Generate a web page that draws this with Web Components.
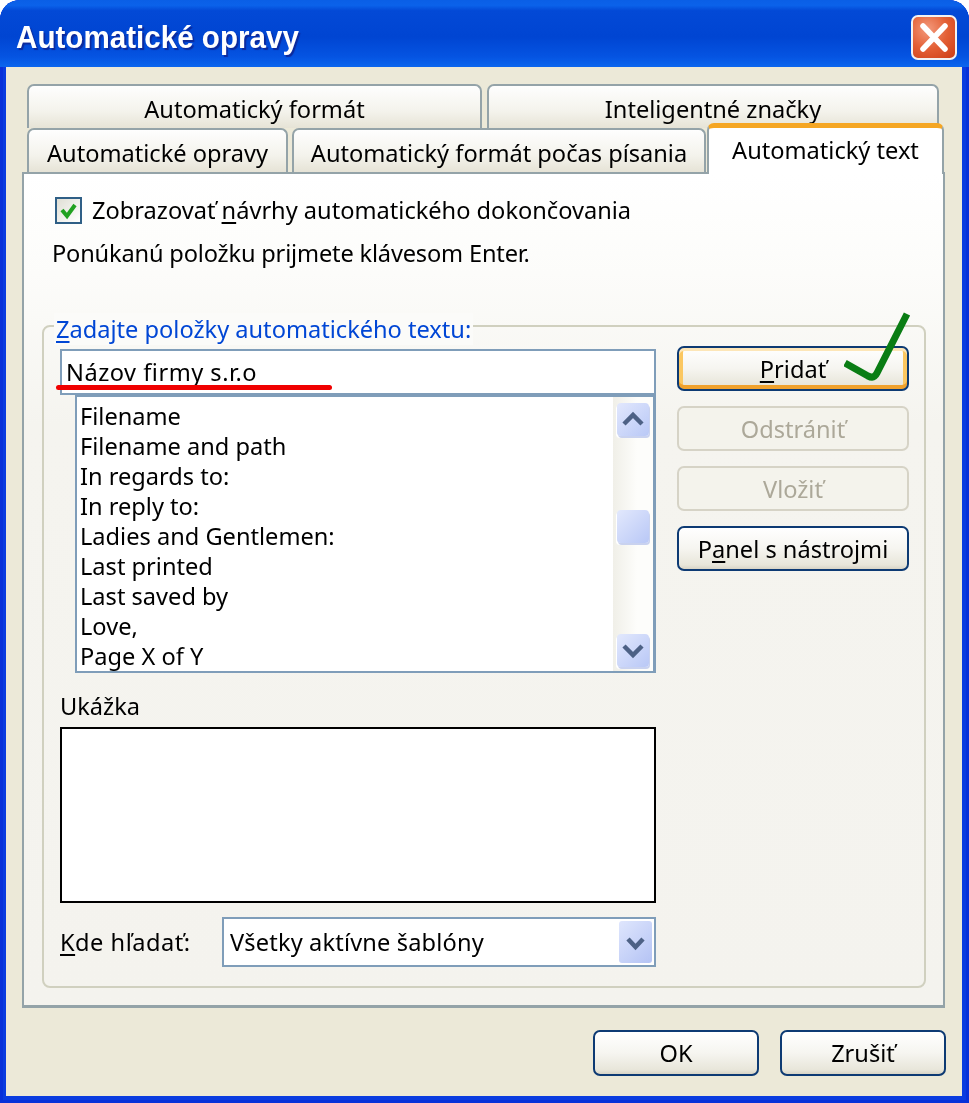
<!DOCTYPE html>
<html lang="sk">
<head>
<meta charset="utf-8">
<title>Automatické opravy</title>
<style>
html, body { margin: 0; padding: 0; background: #fff; }
body { width: 969px; height: 1103px; overflow: hidden; font-family: "Noto Sans", "Liberation Sans", sans-serif; font-size: 23.6px; color: #000; }
</style>
</head>
<body>
<xp-window caption="Automatické opravy">
  <xp-tabs>
    <xp-tab slot="top" style="width:455px">Automatický formát</xp-tab>
    <xp-tab slot="top" style="width:452px">Inteligentné značky</xp-tab>
    <xp-tab slot="bottom" style="width:261px">Automatické opravy</xp-tab>
    <xp-tab slot="bottom" style="width:414px">Automatický formát počas písania</xp-tab>
    <xp-tab slot="bottom" selected style="width:237px;margin-left:-3px">Automatický text</xp-tab>
    <xp-autotext-page slot="panel"></xp-autotext-page>
  </xp-tabs>
  <xp-button slot="footer" style="width:166px;height:46px">OK</xp-button>
  <xp-button slot="footer" style="width:166px;height:46px">Zrušiť</xp-button>
</xp-window>

<script>
class XpWindow extends HTMLElement {
    constructor() {
        super();
        this.attachShadow({ mode: "open" });
        this.shadowRoot.innerHTML = `
        <style>
        :host { display: block; width: 969px; height: 1103px; filter: blur(.7px); }
        .frame {
            height: 100%;
            box-sizing: border-box;
            display: flex;
            flex-direction: column;
            background: #0a3ce0;
            border-radius: 20px 20px 0 0;
            padding: 0 7px 7px 6px;
            box-shadow: inset 3px 0 0 #0831d9, inset -3px 0 0 #0831d9, inset 0 -3px 0 #0831d9;
        }
        .title {
            flex: none;
            height: 67px;
            margin: 0 -7px 0 -6px;
            padding: 8px 12px 0 16px;
            display: flex;
            align-items: center;
            justify-content: space-between;
            box-sizing: border-box;
            border-radius: 20px 20px 0 0;
            background: linear-gradient(#0a5fe6 0, #0b62ea 8%, #0349d6 16%, #0045d2 55%, #0554e2 85%, #0b66ee 100%);
        }
        .caption {
            font: bold 32px "Liberation Sans", sans-serif;
            color: #fff;
            text-shadow: 2px 2px 1px #0c2a9c;
            transform: scaleX(.925);
            transform-origin: left;
            white-space: nowrap;
        }
        .close {
            width: 46px;
            height: 45px;
            box-sizing: border-box;
            border: 2px solid #f2f2f2;
            border-radius: 7px;
            background: radial-gradient(circle at 35% 30%, #f39a7d 0, #e35f35 50%, #cc3d16 100%);
        }
        .close svg { display: block; width: 100%; height: 100%; }
        .client {
            flex: 1;
            display: flex;
            flex-direction: column;
            background: #ece9d8;
            padding: 17px 17px 20px 16px;
            min-height: 0;
        }
        .footer {
            display: flex;
            justify-content: flex-end;
            gap: 21px;
            margin: 22px -1px 0 0;
        }
        </style>
        <div class="frame">
            <div class="title">
                <span class="caption"></span>
                <div class="close">
                    <svg viewBox="0 0 42 41"><path d="M10 9 L32 32 M32 9 L10 32" stroke="#fff" stroke-width="5.5" stroke-linecap="round" fill="none"/></svg>
                </div>
            </div>
            <div class="client">
                <slot></slot>
                <div class="footer"><slot name="footer"></slot></div>
            </div>
        </div>`;
        this.shadowRoot.querySelector(".caption").textContent = this.getAttribute("caption");
    }
}
customElements.define("xp-window", XpWindow);

class XpTabs extends HTMLElement {
    constructor() {
        super();
        this.attachShadow({ mode: "open" });
        this.shadowRoot.innerHTML = `
        <style>
        :host { display: block; }
        .row { display: flex; align-items: flex-end; }
        .row--top { gap: 5px; padding-left: 5px; height: 44px; }
        .row--bottom { gap: 4px; padding-left: 5px; height: 44px; position: relative; z-index: 1; }
        .panel {
            height: 836px;
            box-sizing: border-box;
            border: 2px solid #94a3a8;
            border-bottom-width: 3px;
            background: linear-gradient(#fff 0, #fcfcfa 12%, #f5f4ef 30%, #f4f3ee 100%);
        }
        </style>
        <div class="row row--top"><slot name="top"></slot></div>
        <div class="row row--bottom"><slot name="bottom"></slot></div>
        <div class="panel"><slot name="panel"></slot></div>`;
    }
}
customElements.define("xp-tabs", XpTabs);

class XpTab extends HTMLElement {
    constructor() {
        super();
        this.attachShadow({ mode: "open" });
        this.shadowRoot.innerHTML = `
        <style>
        :host {
            display: flex;
            flex: none;
            align-items: center;
            justify-content: center;
            box-sizing: border-box;
            height: 44px;
            white-space: nowrap;
            padding-top: 4px;
            border: 2px solid #94a3a8;
            border-bottom: 0;
            border-radius: 7px 7px 0 0;
            background: linear-gradient(#fefefe, #f4f3ec 60%, #e6e3d6);
        }
        :host([selected]) {
            height: 51px;
            margin-bottom: -2px;
            padding-top: 2px;
            padding-bottom: 5px;
            border-top: 5px solid #f5a623;
            background: linear-gradient(#fff, #fff);
        }
        </style>
        <slot></slot>`;
    }
}
customElements.define("xp-tab", XpTab);

class XpButton extends HTMLElement {
    constructor() {
        super();
        this.attachShadow({ mode: "open" });
        this.shadowRoot.innerHTML = `
        <style>
        :host {
            display: flex;
            flex: none;
            align-items: center;
            justify-content: center;
            box-sizing: border-box;
            white-space: nowrap;
            border: 2px solid #0d3a73;
            border-radius: 7px;
            background: linear-gradient(#fff, #f6f5f0 50%, #e8e6da 90%, #d8d4c6);
        }
        :host([focused]) {
            box-shadow: inset 0 3px 0 #fde6b8, inset 0 -4px 0 #f0a12c, inset 4px 0 0 #fbc761, inset -4px 0 0 #fbc761;
        }
        :host([disabled]) {
            border-color: #d6d3c6;
            background: #f4f3ec;
            color: #aca899;
        }
        </style>
        <slot></slot>`;
    }
}
customElements.define("xp-button", XpButton);

class XpCheckbox extends HTMLElement {
    constructor() {
        super();
        this.attachShadow({ mode: "open" });
        this.shadowRoot.innerHTML = `
        <style>
        :host { display: flex; align-items: center; gap: 10px; white-space: nowrap; }
        .box {
            flex: none;
            width: 27px;
            height: 27px;
            box-sizing: border-box;
            border: 2px solid #2f5f86;
            background: linear-gradient(135deg, #e0dfd5, #fff);
        }
        .box svg { display: block; width: 100%; height: 100%; }
        </style>
        <span class="box"><svg viewBox="0 0 23 23"><path d="M5 11 L10 17 L18 6" stroke="#21a121" stroke-width="4" fill="none"/></svg></span>
        <span><slot></slot></span>`;
    }
}
customElements.define("xp-checkbox", XpCheckbox);

class XpScrollbar extends HTMLElement {
    constructor() {
        super();
        this.attachShadow({ mode: "open" });
        this.shadowRoot.innerHTML = `
        <style>
        :host {
            display: block;
            position: relative;
            width: 40px;
            box-sizing: border-box;
            background: linear-gradient(90deg, #f0efe8, #fdfdfb 60%, #fdfdfb);
        }
        .btn, .thumb {
            position: absolute;
            left: 4px;
            width: 32px;
            height: 33px;
            box-sizing: border-box;
            border-radius: 4px;
            background: linear-gradient(135deg, #e2e8fd, #b9c8f6);
            box-shadow: 1px 2px 0 #c9d2ef, -1px 2px 0 #fff;
        }
        .btn svg { display: block; width: 100%; height: 100%; }
        .up { top: 6px; }
        .down { bottom: 4px; }
        .thumb { top: 113px; }
        </style>
        <div class="btn up"><svg viewBox="0 0 32 33"><path d="M7 21 L16 12 L25 21" stroke="#4d6185" stroke-width="4.5" fill="none"/></svg></div>
        <div class="thumb"></div>
        <div class="btn down"><svg viewBox="0 0 32 33"><path d="M7 12 L16 21 L25 12" stroke="#4d6185" stroke-width="4.5" fill="none"/></svg></div>`;
    }
}
customElements.define("xp-scrollbar", XpScrollbar);

class XpListbox extends HTMLElement {
    constructor() {
        super();
        this.attachShadow({ mode: "open" });
        this.shadowRoot.innerHTML = `
        <style>
        :host {
            display: flex;
            box-sizing: border-box;
            height: 278px;
            margin-left: 15px;
            border: 2px solid #7f9db9;
            border-right-width: 3px;
            background: #fff;
        }
        .items { flex: 1; overflow: hidden; padding: 4px 0 0 3px; line-height: 30px; }
        ::slotted(div) { white-space: nowrap; }
        </style>
        <div class="items"><slot></slot></div>
        <xp-scrollbar></xp-scrollbar>`;
    }
}
customElements.define("xp-listbox", XpListbox);

class XpCombo extends HTMLElement {
    constructor() {
        super();
        this.attachShadow({ mode: "open" });
        this.shadowRoot.innerHTML = `
        <style>
        :host {
            flex: 1;
            display: flex;
            align-items: center;
            justify-content: space-between;
            box-sizing: border-box;
            height: 50px;
            padding: 0 2px 0 6px;
            border: 2px solid #7f9db9;
            background: #fff;
            white-space: nowrap;
            letter-spacing: .15px;
        }
        .arrow {
            width: 33px;
            height: 42px;
            border-radius: 3px;
            background: linear-gradient(135deg, #dfe6fd, #b4c3f4);
        }
        .arrow svg { display: block; width: 100%; height: 100%; }
        </style>
        <span><slot></slot></span>
        <div class="arrow"><svg viewBox="0 0 33 42"><path d="M9 18 L16.500 26 L24 18" stroke="#4d6185" stroke-width="4.500" fill="none"/></svg></div>`;
    }
}
customElements.define("xp-combo", XpCombo);

class XpGroup extends HTMLElement {
    constructor() {
        super();
        this.attachShadow({ mode: "open" });
        this.shadowRoot.innerHTML = `
        <style>
        :host {
            display: block;
            position: relative;
            box-sizing: border-box;
            height: 663px;
            border: 2px solid #d0d0bf;
            border-radius: 8px;
        }
        .legend {
            position: absolute;
            left: 10px;
            top: -14px;
            padding: 0 2px;
            background: #fbfbf9;
            color: #0046d5;
            line-height: 32px;
            white-space: nowrap;
        }
        </style>
        <div class="legend"><slot name="legend"></slot></div>
        <slot></slot>`;
    }
}
customElements.define("xp-group", XpGroup);

class XpAutotextPage extends HTMLElement {
    constructor() {
        super();
        this.attachShadow({ mode: "open" });
        const names = ["Filename", "Filename and path", "In regards to:", "In reply to:", "Ladies and Gentlemen:", "Last printed", "Last saved by", "Love,", "Page X of Y"];
        this.shadowRoot.innerHTML = `
        <style>
        :host { display: block; padding: 21px 17px 18px 18px; }
        u { text-underline-offset: 3px; }
        .hint { margin: 13px 0 0 10px; height: 30px; line-height: 30px; white-space: nowrap; letter-spacing: -.17px; }
        xp-checkbox { margin-left: 13px; height: 30px; }
        xp-group { margin-top: 57px; }
        .inner {
            display: grid;
            grid-template-columns: 596px 232px;
            column-gap: 21px;
            padding: 22px 0 0 16px;
        }
        .left { display: flex; flex-direction: column; }
        .right { display: flex; flex-direction: column; gap: 15px; margin-top: -3px; }
        .right xp-button { height: 45px; }
        .field {
            position: relative;
            box-sizing: border-box;
            height: 46px;
            padding: 2px 0 0 4px;
            line-height: 38px;
            border: 2px solid #7f9db9;
            background: #fff;
            white-space: nowrap;
            letter-spacing: .5px;
        }
        .red-line {
            position: absolute;
            left: -6px;
            bottom: 3px;
            width: 276px;
            height: 5px;
            border-radius: 3px;
            background: #f00000;
        }
        .check {
            position: absolute;
            left: 800px;
            top: -18px;
            width: 70px;
            height: 74px;
            pointer-events: none;
        }
        .preview-label { margin-top: 17px; height: 37px; line-height: 32px; }
        .preview { height: 176px; box-sizing: border-box; border: 2px solid #000; background: #fff; }
        .where { display: flex; align-items: center; margin-top: 14px; white-space: nowrap; }
        .where span { flex: none; width: 162px; letter-spacing: .5px; }
        </style>
        <xp-checkbox>Zobrazovať <u>n</u>ávrhy automatického dokončovania</xp-checkbox>
        <div class="hint">Ponúkanú položku prijmete klávesom Enter.</div>
        <xp-group>
            <span slot="legend"><u>Z</u>adajte položky automatického textu:</span>
            <div class="inner">
                <div class="left">
                    <div class="field">Názov firmy s.r.o<span class="red-line"></span></div>
                    <xp-listbox>${names.map(n => `<div>${n}</div>`).join("")}</xp-listbox>
                    <div class="preview-label">Ukážka</div>
                    <div class="preview"></div>
                    <div class="where"><span><u>K</u>de hľadať:</span><xp-combo>Všetky aktívne šablóny</xp-combo></div>
                </div>
                <div class="right">
                    <xp-button focused><span><u>P</u>ridať</span></xp-button>
                    <xp-button disabled>Odstrániť</xp-button>
                    <xp-button disabled>Vložiť</xp-button>
                    <xp-button><span>P<u>a</u>nel s nástrojmi</span></xp-button>
                </div>
            </div>
            <svg class="check" viewBox="0 0 70 74"><path d="M1 54 L24 67 Q30 70 33 64 L63 5" stroke="#0a7d14" stroke-width="7" fill="none" stroke-linejoin="round"/></svg>
        </xp-group>`;
    }
}
customElements.define("xp-autotext-page", XpAutotextPage);
</script>
</body>
</html>
